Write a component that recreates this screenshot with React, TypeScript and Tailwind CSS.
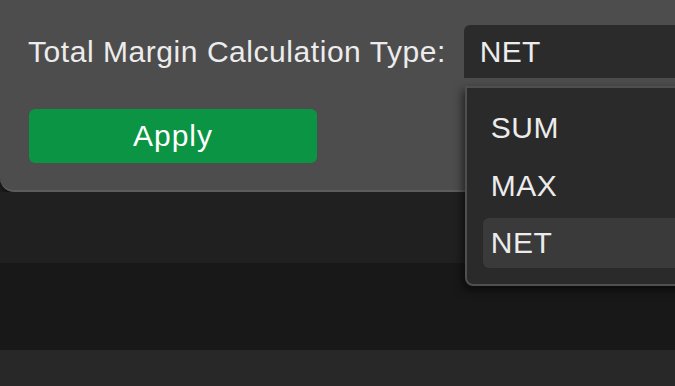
import React from "react";

const OPTIONS = ["SUM", "MAX", "NET"];

export default function App() {
  const selected = "NET";

  return (
    <div
      className="w-[675px] h-[386px] overflow-hidden flex flex-col bg-[#1f1f1f] text-[#ececec]"
      style={{ fontFamily: '"Liberation Sans", Arial, sans-serif' }}
    >
      {/* Settings panel */}
      <div className="h-[192px] shrink-0 bg-[#4d4d4d] rounded-bl-[14px] border-b-2 border-[#5c5c5c] shadow-[0_3px_4px_rgba(0,0,0,0.5)] pl-[28px] pt-[25px] flex flex-col gap-[31px]">
        <div className="flex items-center gap-[18px]">
          <span className="text-[30px] leading-none tracking-[0.55px] whitespace-nowrap">
            Total Margin Calculation Type:
          </span>

          {/* Select + open menu */}
          <div className="relative shrink-0">
            <div className="w-[260px] h-[53px] bg-[#2b2b2b] rounded-tl-[6px] flex items-center pl-[16px] text-[30px] leading-none tracking-[0.3px]">
              {selected}
            </div>

            <div className="absolute left-[1px] top-[61px] w-[260px] z-10 bg-[#2a2a2a] border-2 border-[#4f4f4f] rounded-bl-[8px] shadow-[-2px_4px_10px_rgba(0,0,0,0.6)] pl-[16px] pt-[15px] pb-[16px] flex flex-col gap-[7.5px]">
              {OPTIONS.map((o) => (
                <div
                  key={o}
                  className={
                    o === selected
                      ? "h-[50px] flex items-center pl-[8px] text-[30px] leading-none tracking-[0.5px] bg-[#3a3a3a] rounded-l-[6px]"
                      : "h-[50px] flex items-center pl-[8px] text-[30px] leading-none tracking-[0.5px]"
                  }
                >
                  {o}
                </div>
              ))}
            </div>
          </div>
        </div>

        <button className="ml-[1px] w-[288px] h-[54px] bg-[#0a9443] rounded-[6px] text-[30px] leading-none tracking-[1px] text-white">
          Apply
        </button>
      </div>

      {/* Lower bands */}
      <div className="h-[71px] shrink-0 bg-[#202020]" />
      <div className="h-[87px] shrink-0 bg-[#181818]" />
      <div className="flex-1 bg-[#282828]" />
    </div>
  );
}
